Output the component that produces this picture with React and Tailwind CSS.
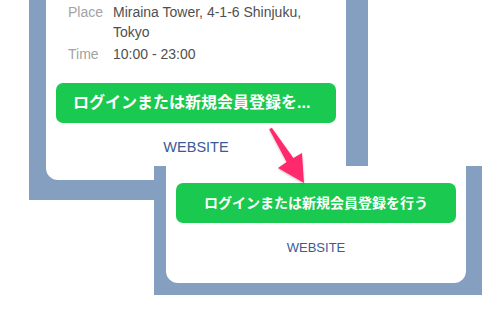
import React from "react";

const FONT = {
  fontFamily: '"Liberation Sans", "Noto Sans CJK JP", sans-serif',
};

const Row = ({ label, children, className = "" }) => (
  <div className={`flex text-[14px] leading-[20px] ${className}`}>
    <span className="w-[45px] shrink-0 text-[#a3a3a3]">{label}</span>
    <span className="text-[#4f4f4f]">{children}</span>
  </div>
);

const Arrow = () => (
  <svg
    className="absolute left-0 top-0 pointer-events-none"
    width="502"
    height="311"
    viewBox="0 0 502 311"
  >
    <defs>
      <filter id="sh" x="-20%" y="-20%" width="140%" height="140%">
        <feDropShadow dx="0" dy="1" stdDeviation="1" floodColor="#000" floodOpacity="0.25" />
      </filter>
    </defs>
    <polygon
      filter="url(#sh)"
      fill="#ff2b6d"
      points="271.8,127.7 293.4,157.9 302,153 304,183 278,168 286.6,162.1 269.2,129.3"
    />
  </svg>
);

export default function App() {
  return (
    <div className="relative w-[502px] h-[311px] bg-white overflow-hidden" style={FONT}>
      {/* first screenshot */}
      <div className="absolute left-[29px] top-0 w-[339px] h-[200px] bg-[#849fc0] pl-[17px] pr-[22px] pb-[20px] overflow-hidden">
        <div className="h-full bg-white rounded-b-[12px] pt-[2px] px-[10px] pb-[23px] flex flex-col">
          <div className="pl-[12px]">
            <Row label="Place">
              Miraina Tower, 4-1-6 Shinjuku,
              <br />
              Tokyo
            </Row>
            <Row label="Time" className="mt-[2px]">
              10:00 - 23:00
            </Row>
          </div>
          <button
            type="button"
            className="mt-[19px] h-[40px] w-full rounded-[7px] bg-[#1ac94f] text-white text-[16px] font-bold text-left pl-[17px] whitespace-nowrap"
          >
            ログインまたは新規会員登録を...
          </button>
          <div className="mt-[14px] text-center text-[14.5px] leading-[20px] text-[#3b5a97]">
            WEBSITE
          </div>
        </div>
      </div>

      {/* second screenshot */}
      <div className="absolute left-[154px] top-[166px] w-[328px] h-[129px] bg-[#849fc0] pl-[12px] pr-[16px] pb-[12px]">
        <div className="h-full bg-white rounded-b-[12px] pt-[17px] px-[10px] flex flex-col">
          <button
            type="button"
            className="h-[40px] w-full rounded-[7px] bg-[#1ac94f] text-white text-[14px] font-bold text-center whitespace-nowrap"
          >
            ログインまたは新規会員登録を行う
          </button>
          <div className="mt-[15px] text-center text-[13px] leading-[20px] text-[#3b5a97]">
            WEBSITE
          </div>
        </div>
      </div>

      <Arrow />
    </div>
  );
}
